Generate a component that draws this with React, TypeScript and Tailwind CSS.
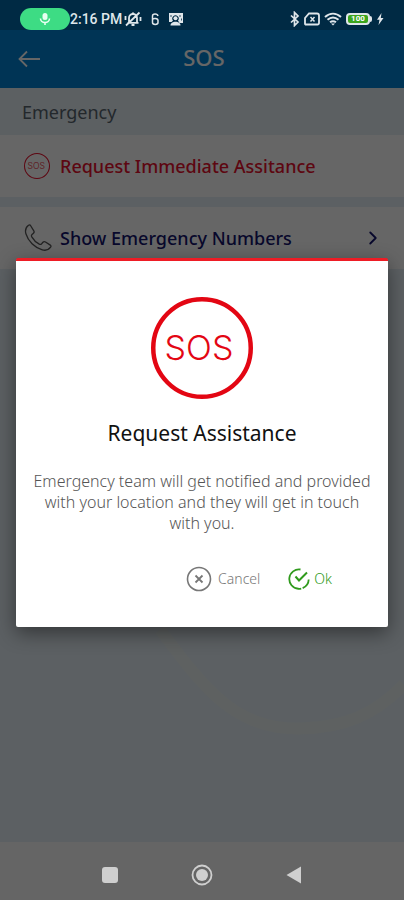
import React, { useState } from 'react';
import { ChevronRight } from 'lucide-react';

function SosIcon({ className, stroke, weight }: { className: string; stroke: number; weight: number }) {
  return (
    <svg viewBox="0 0 102 102" className={className} aria-hidden="true">
      <circle cx="51" cy="51" r={51 - stroke / 2} fill="none" stroke="currentColor" strokeWidth={stroke} />
      <text x="48" y="63" textAnchor="middle" fontSize="34" fontWeight={weight} fontFamily="Inter, sans-serif" fill="currentColor">
        SOS
      </text>
    </svg>
  );
}

function StatusBar() {
  return (
    <div className="h-[30px] pt-2 pl-5 pr-5 flex items-center justify-between bg-[#002a44] text-[#dfe6ea]">
      <div className="flex items-center">
        <span className="w-[50px] h-[22px] rounded-full bg-[#3ddc84] flex items-center justify-center">
          <svg viewBox="0 0 12 14" className="w-3 h-[14px]" fill="none" stroke="#e8fff2">
            <rect x="3.5" y="1" width="5" height="7" rx="2.5" fill="#e8fff2" stroke="none" />
            <path d="M1.5 6.5a4.5 4 0 0 0 9 0M6 10.5V13" strokeWidth="1.6" />
          </svg>
        </span>
        <span className="font-['Roboto',sans-serif] text-sm font-medium whitespace-nowrap">2:16 PM</span>
        <svg viewBox="0 0 18 16" className="ml-0.5 w-[18px] h-4" fill="none" stroke="currentColor" strokeWidth="1.8">
          <path d="M5 11.5V7a4 4 0 0 1 8 0v4.5M3.5 11.8h11M7.5 14h3M2 14.5 15.5 1.5M1.5 5v4M16.5 6v4M8 2.5h2" />
        </svg>
        <svg viewBox="0 0 10 14" className="ml-2 w-[10px] h-[14px]" fill="none" stroke="currentColor" strokeWidth="1.5">
          <path d="M8 4C7.500 1.200 2.500 1.200 2.500 4v6.500c0 2.500 5.500 2.500 5.500 0V8.500C8 6 3 6 2.500 7.500" />
        </svg>
        <svg viewBox="0 0 16 14" className="ml-2 w-4 h-[14px]" fill="currentColor">
          <path d="M1 1h14v10h-3.500L10 8.500a3.200 3.200 0 1 0-5 0L3.500 10H1z" />
          <circle cx="7.500" cy="6.200" r="2" />
          <path d="M2.500 13.500c0-5 10-5 10 0z" />
          <path d="M12 3v2M13.500 6.500v2M2 4h2" stroke="#002a44" strokeWidth=".8" />
        </svg>
      </div>
      <div className="flex items-center">
        <svg viewBox="0 0 10 16" className="w-[10px] h-4" fill="none" stroke="currentColor" strokeWidth="1.7">
          <path d="M1 4.500 8 11l-3.500 3.500v-13L8 5l-7 6.500" />
        </svg>
        <svg viewBox="0 0 16 14" className="ml-1 w-4 h-[14px]" fill="none" stroke="currentColor" strokeWidth="1.8">
          <path d="M1 12V6l4-4.500h8a2 2 0 0 1 2 2V11a1.500 1.500 0 0 1-1.500 1.500H1.500z" />
          <path d="m6.500 5 4 4.500m0-4.500-4 4.500" strokeWidth="1.5" />
        </svg>
        <svg viewBox="0 0 18 14" className="ml-1 w-[18px] h-[14px]" fill="none" stroke="currentColor" strokeWidth="2">
          <path d="M1 5c5-4.500 11-4.500 16 0M3.500 7.800c3.500-3 7.500-3 11 0M6 10.300c2-1.500 4-1.500 6 0" />
          <path d="m7 11.500 2 2 2-2z" fill="currentColor" stroke="none" />
        </svg>
        <span className="ml-1 w-6 h-3 rounded-sm border-2 border-[#dfe6ea] bg-[#3ba51c] flex items-center justify-center font-['Roboto',sans-serif] text-[8px] leading-none font-bold text-white">
          100
        </span>
        <span className="w-0.5 h-1.5 rounded-r bg-[#dfe6ea]" />
        <svg viewBox="0 0 8 12" className="ml-1 w-2 h-3" fill="currentColor">
          <path d="M5.500 0 1 6.800h2.500L2.500 12 7.500 5H4.800z" />
        </svg>
      </div>
    </div>
  );
}

function NavBar() {
  return (
    <nav className="h-[58px] pt-2 px-[100px] flex items-center justify-between bg-[#656565] text-[#cfcfcf]">
      <button aria-label="Recent apps" className="w-5 h-6 flex items-center justify-center">
        <span className="w-4 h-4 rounded-[3px] bg-[#cfcfcf]" />
      </button>
      <button aria-label="Home">
        <svg viewBox="0 0 22 22" className="w-[22px] h-[22px]">
          <circle cx="11" cy="11" r="9.500" fill="none" stroke="currentColor" strokeWidth="1.800" />
          <circle cx="11" cy="11" r="6" fill="currentColor" />
        </svg>
      </button>
      <button aria-label="Back" className="w-5 h-6 flex items-center justify-center">
        <svg viewBox="0 0 16 18" className="w-4 h-[18px]" fill="currentColor">
          <path d="M15 .5v17L.5 9z" />
        </svg>
      </button>
    </nav>
  );
}

function AssistanceDialog({ onClose }: { onClose: () => void }) {
  return (
    <div className="absolute inset-0 z-10 px-4 pt-3 flex items-center justify-center bg-black/60">
      <div
        role="dialog"
        aria-labelledby="dialog-title"
        className="w-full max-w-md px-3 pt-9 pb-[35px] flex flex-col items-center bg-white border-t-[3px] border-[#ee1c25] rounded-xs shadow-[0_6px_20px_rgba(0,0,0,0.45)]"
      >
        <SosIcon className="w-[102px] h-[102px] text-[#e30613]" stroke={4.5} weight={300} />
        <h2 id="dialog-title" className="mt-5 text-[21px] leading-7 text-[#111]">Request Assistance</h2>
        <p className="mt-6 text-base leading-[21px] font-light text-center text-[#555]">
          Emergency team will get notified and provided with your location and they will get in touch with you.
        </p>
        <div className="mt-8 w-full pr-11 flex items-center justify-end gap-7 text-sm font-light">
          <button onClick={onClose} className="flex items-center gap-1.5 text-[#777]">
            <svg viewBox="0 0 26 26" className="w-[26px] h-[26px]" fill="none" stroke="currentColor" strokeWidth="1.600">
              <circle cx="13" cy="13" r="11.500" />
              <path d="m9.500 9.500 7 7m0-7-7 7" strokeWidth="1.800" />
            </svg>
            Cancel
          </button>
          <button onClick={onClose} className="flex items-center gap-1 text-[#2f9a1c]">
            <svg viewBox="0 0 22 24" className="w-[22px] h-6" fill="none" stroke="currentColor" strokeWidth="1.800">
              <path d="M12.500 2.500A9.700 9.700 0 1 0 20.700 12.500" strokeDasharray="34 1.500" />
              <path d="m7.500 9.500 3.500 4L19 5.500" strokeWidth="2" />
            </svg>
            Ok
          </button>
        </div>
      </div>
    </div>
  );
}

function App() {
  const [open, setOpen] = useState(true);

  return (
    <div className="min-h-screen flex flex-col bg-[#e6f0f8] font-['Noto_Sans',sans-serif]">
      <StatusBar />
      <div className="relative flex-1 flex flex-col overflow-hidden">
        <header className="h-[58px] px-[18px] flex items-center bg-[#0082d4] text-white">
          <button aria-label="Go back">
            <svg viewBox="0 0 24 24" className="w-6 h-6" fill="none" stroke="currentColor" strokeWidth="1.800">
              <path d="M22 12H1.500M9 4.500 1.500 12 9 19.500" />
            </svg>
          </button>
          <h1 className="flex-1 pr-5 pb-1 text-center text-[22px] leading-7 font-medium">SOS</h1>
        </header>
        <main className="flex-1 flex flex-col">
          <h2 className="h-[47px] px-[22px] flex items-center text-lg text-[#57656f] bg-[#e6eff5]">Emergency</h2>
          <button onClick={() => setOpen(true)} className="h-[62px] px-6 flex items-center gap-2.5 bg-white text-[#e8112d]">
            <SosIcon className="w-[26px] h-[26px]" stroke={4} weight={300} />
            <span className="text-lg font-medium">Request Immediate Assitance</span>
          </button>
          <a href="#numbers" className="mt-2.5 h-[62px] pl-6 pr-5 flex items-center gap-2 bg-white text-[#14146e]">
            <svg viewBox="0 0 28 28" className="w-7 h-7 text-[#555]" fill="none" stroke="currentColor" strokeWidth="1.3" strokeLinejoin="round">
              <path d="M6.500 1.500 9.800 6.800c.6 1 .3 2-.6 2.700L8 10.600c-.7.6-.6 1.500-.2 2.300 1.800 3.200 4.300 5.700 7.500 7.300.9.400 1.700.3 2.300-.4l1.300-1.500c.7-.8 1.700-.9 2.600-.3l4.800 3.100c.8.600.9 1.400.3 2.100-2 2.600-5 3.600-8.300 2.600C10.500 23.600 4.200 17.200 1.900 9.700.9 6.300 2 3.300 4.500 1.300c.7-.6 1.500-.5 2 .2z" />
            </svg>
            <span className="flex-1 text-lg font-medium">Show Emergency Numbers</span>
            <ChevronRight size={22} />
          </a>
          <svg viewBox="0 0 404 572" className="w-full flex-1" fill="none" stroke="#eaf3f3" strokeWidth="12" aria-hidden="true">
            <path d="M160 360C205 420 235 460 300 459C345 458 375 445 404 415" />
          </svg>
        </main>
        {open && <AssistanceDialog onClose={() => setOpen(false)} />}
      </div>
      <NavBar />
    </div>
  );
}

export default App;
